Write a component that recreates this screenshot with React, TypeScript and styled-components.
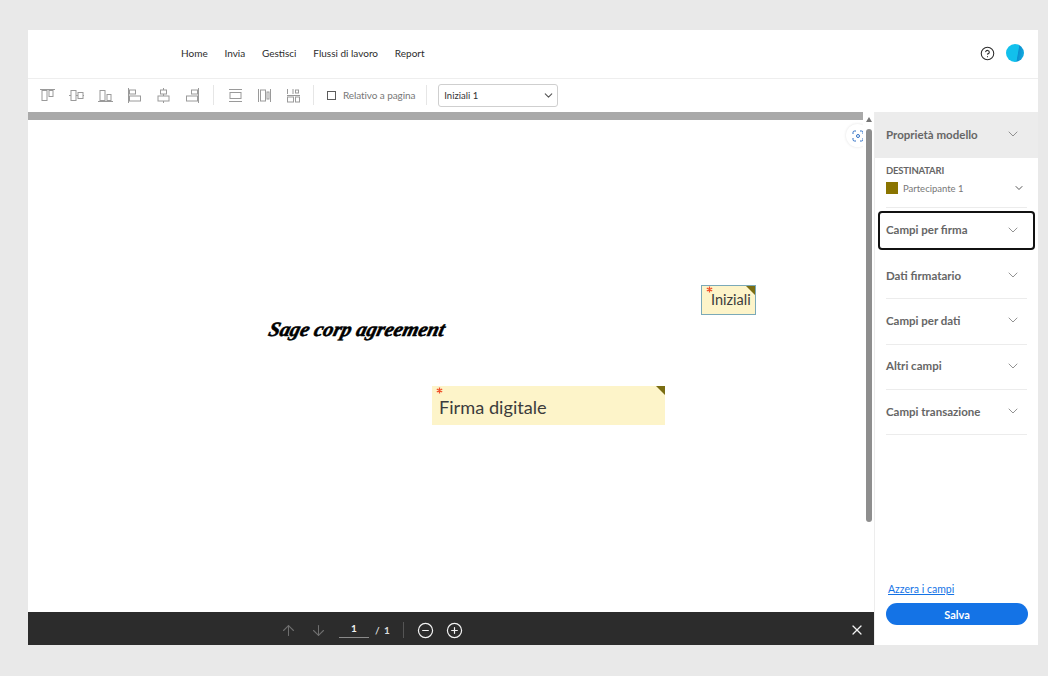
import React, { FunctionComponent } from 'react';
import styled, { createGlobalStyle } from 'styled-components';
import { ChevronDown, ArrowUp, ArrowDown, X, CircleHelp, CircleMinus, CirclePlus } from 'lucide-react';

const GlobalStyle = createGlobalStyle`
  html, body {
    margin: 0;
    padding: 0;
    background: #e9e9e9;
    font-family: "Lato", "Noto Sans", sans-serif;
  }
`;

const Page = styled.div`
  box-sizing: border-box;
  width: 1048px;
  height: 676px;
  padding: 30px 10px 31px 28px;
  overflow: hidden;
`;

const Frame = styled.div`
  display: flex;
  flex-direction: column;
  height: 100%;
  background: #fff;
`;

const Header = styled.header`
  display: flex;
  align-items: center;
  flex: 0 0 49px;
  box-sizing: border-box;
  padding: 0 14px 2px 153px;
  border-bottom: 1px solid #eeeeee;
`;

const Nav = styled.nav`
  display: flex;
  gap: 16.8px;
  flex: 1;
`;

const NavLink = styled.a`
  font-size: 10px;
  color: #2c2c2c;
`;

const HeaderIcons = styled.div`
  display: flex;
  align-items: center;
  gap: 11px;
  color: #2c2c2c;
`;

const Avatar = styled.span`
  display: block;
  width: 18px;
  height: 18px;
  border-radius: 50%;
  background: linear-gradient(100deg, #12c0ec 0 62%, #0c8fd0 66%, #14b4e4 100%);
`;

const Toolbar = styled.div`
  display: flex;
  align-items: center;
  flex: 0 0 33px;
  box-sizing: border-box;
  padding: 0 0 1px 11px;
`;

const ToolIcon = styled.svg`
  display: block;
  width: 17px;
  height: 17px;
  margin-right: 12px;
  fill: none;
  stroke: #9a9a9a;
  stroke-width: 1;
`;

const Divider = styled.span<{ $left?: number; $right?: number }>`
  width: 1px;
  height: 20px;
  background: #e6e6e6;
  margin-left: ${({ $left }) => $left ?? 0}px;
  margin-right: ${({ $right }) => $right ?? 13}px;
`;

const Check = styled.span`
  box-sizing: border-box;
  width: 9px;
  height: 9px;
  border: 1.5px solid #5c5c5c;
  margin-right: 7px;
`;

const CheckLabel = styled.span`
  font-size: 10px;
  letter-spacing: -0.1px;
  color: #777;
  margin-right: 11px;
`;

const Select = styled.div`
  box-sizing: border-box;
  display: flex;
  align-items: center;
  justify-content: space-between;
  width: 120px;
  height: 23px;
  padding: 0 2px 0 5px;
  border: 1px solid #cfcfcf;
  border-radius: 3px;
  font-size: 9.5px;
  color: #333;
`;

const Main = styled.main`
  display: flex;
  flex: 1;
  min-height: 0;
`;

const DocColumn = styled.div`
  display: flex;
  flex-direction: column;
  width: 846px;
`;

const DocRow = styled.div`
  display: flex;
  flex: 1;
  min-height: 0;
`;

const Canvas = styled.div`
  position: relative;
  flex: 1;
  border-top: 8px solid #a9a9a9;
  background: #fff;
`;

const Scrollbar = styled.div`
  position: relative;
  z-index: 1;
  display: flex;
  flex-direction: column;
  align-items: center;
  width: 11px;
  background: #fff;
`;

const ScrollArrow = styled.span`
  width: 0;
  height: 0;
  margin-top: 5px;
  border-left: 3.5px solid transparent;
  border-right: 3.5px solid transparent;
  border-bottom: 5px solid #777;
`;

const ScrollThumb = styled.span`
  width: 6px;
  height: 393px;
  margin-top: 7px;
  border-radius: 3px;
  background: #8e8e8e;
`;

const ScanButton = styled.span`
  position: absolute;
  top: 4px;
  right: -6px;
  display: flex;
  align-items: center;
  justify-content: center;
  width: 23px;
  height: 23px;
  border-radius: 50%;
  background: #fff;
  box-shadow: 0 0 3px rgba(0, 0, 0, 0.12);
`;

const Signature = styled.span`
  position: absolute;
  left: 241px;
  top: 198px;
  font-family: "Liberation Serif", serif;
  font-size: 20.3px;
  font-style: italic;
  font-weight: 700;
  color: #000;
  -webkit-text-stroke: 0.6px #000;
  transform: skewX(-14deg);
  white-space: nowrap;
`;

const Field = styled.div<{ $left: number; $top: number; $w: number; $h: number; $outlined?: boolean; $size: number }>`
  position: absolute;
  box-sizing: border-box;
  left: ${({ $left }) => $left}px;
  top: ${({ $top }) => $top}px;
  width: ${({ $w }) => $w}px;
  height: ${({ $h }) => $h}px;
  background: #fdf4c9;
  border: ${({ $outlined }) => ($outlined ? '1px solid #7aa9b8' : 'none')};
  font-size: ${({ $size }) => $size}px;
  color: #3c3c3c;
  white-space: nowrap;
`;

const FieldText = styled.span<{ $x: number; $y: number }>`
  position: absolute;
  left: ${({ $x }) => $x}px;
  top: ${({ $y }) => $y}px;
  line-height: 1;
`;

const StarMark = styled.svg<{ $x: number; $y: number }>`
  position: absolute;
  left: ${({ $x }) => $x}px;
  top: ${({ $y }) => $y}px;
  width: 7px;
  height: 7px;
  stroke: #f0512a;
  stroke-width: 1.3;
`;

const Corner = styled.span`
  position: absolute;
  top: 0;
  right: 0;
  width: 0;
  height: 0;
  border-top: 9px solid #7a6d12;
  border-left: 9px solid transparent;
`;

const PagerBar = styled.div`
  display: flex;
  align-items: center;
  flex: 0 0 33px;
  box-sizing: border-box;
  padding: 3px 9px 0 252px;
  background: #2c2c2c;
  color: #fff;
`;

const PagerButton = styled.span<{ $dim?: boolean }>`
  display: flex;
  margin-right: ${({ $dim }) => ($dim ? 13 : 12)}px;
  color: ${({ $dim }) => ($dim ? '#6f6f6f' : '#f2f2f2')};
`;

const PageInput = styled.span`
  box-sizing: border-box;
  width: 30px;
  margin-left: -1px;
  padding-bottom: 3px;
  border-bottom: 1px solid #8a8a8a;
  font-size: 10px;
  font-weight: 700;
  text-align: center;
  color: #f2f2f2;
`;

const PageTotal = styled.span`
  margin-left: 6px;
  font-size: 10px;
  font-weight: 700;
  word-spacing: 2px;
  color: #ddd;
`;

const PagerRule = styled.span`
  width: 1px;
  height: 16px;
  margin: 0 13px;
  background: #555;
`;

const PagerClose = styled.span`
  display: flex;
  margin-left: auto;
  color: #f2f2f2;
`;

const Sidebar = styled.aside`
  display: flex;
  flex-direction: column;
  flex: 1;
  border-left: 1px solid #ededed;
`;

const SidebarTitle = styled.div`
  display: flex;
  align-items: center;
  justify-content: space-between;
  flex: 0 0 46px;
  box-sizing: border-box;
  padding: 0 17px 2px 11px;
  background: #ececec;
  font-size: 11.5px;
  font-weight: 700;
  color: #666;
`;

const Recipients = styled.div`
  box-sizing: border-box;
  height: 50px;
  margin: 0 11px 0 11px;
  padding-top: 7px;
  border-bottom: 1px solid #ececec;
`;

const RecipientsLabel = styled.div`
  font-size: 9.5px;
  letter-spacing: -0.2px;
  line-height: 12px;
  font-weight: 700;
  color: #666;
`;

const RecipientRow = styled.div`
  display: flex;
  align-items: center;
  margin-top: 5px;
  padding-right: 2px;
  font-size: 9.5px;
  color: #777;
`;

const Swatch = styled.span`
  width: 12px;
  height: 12px;
  margin-right: 5px;
  background: #8a7400;
`;

const RecipientName = styled.span`
  flex: 1;
`;

const Accordion = styled.div`
  display: flex;
  flex-direction: column;
  flex: 1;
`;

const AccordionItem = styled.div<{ $focused?: boolean }>`
  box-sizing: border-box;
  display: flex;
  align-items: center;
  justify-content: space-between;
  font-size: 11.5px;
  font-weight: 700;
  color: #666;
  ${({ $focused }) =>
    $focused
      ? `
    height: 39px;
    margin: 3px 3px 4px 3px;
    padding: 0 12px 2px 6px;
    border: 2px solid #111;
    border-radius: 4px;
  `
      : `
    height: 45.3px;
    margin: 0 11px 0 11px;
    padding: 0 6px 2px 0;
    border-bottom: 1px solid #ececec;
  `}
`;

const SidebarFooter = styled.div`
  display: flex;
  flex-direction: column;
  margin-top: auto;
  padding: 0 10px 20px 11px;
`;

const ResetLink = styled.a`
  margin: 0 0 8px 2px;
  font-size: 10.5px;
  color: #1473e6;
  text-decoration: underline;
`;

const SaveButton = styled.button`
  height: 22px;
  padding: 0;
  border: none;
  border-radius: 11px;
  background: #1473e6;
  color: #fff;
  font-family: inherit;
  font-size: 11px;
  font-weight: 700;
`;

const alignIcons = [
  <><path d="M1 2.5h15" /><rect x="3" y="3.5" width="5" height="10" /><rect x="10" y="3.5" width="4" height="6" /></>,
  <><path d="M1 8.5h2M8 8.5h2M15 8.5h1" /><rect x="3" y="3.5" width="5" height="10" /><rect x="10" y="5.5" width="5" height="6" /></>,
  <><path d="M1 14.5h15" /><rect x="3" y="3.5" width="5" height="10" /><rect x="10" y="7.5" width="4" height="6" /></>,
  <><path d="M2.5 1v15" /><rect x="3.5" y="3" width="6" height="4" /><rect x="3.5" y="9" width="11" height="5" /></>,
  <><path d="M8.5 1v2M8.5 7v2M8.5 14v2" /><rect x="5.5" y="3" width="6" height="4" /><rect x="3" y="9" width="11" height="5" /></>,
  <><path d="M14.5 1v15" /><rect x="7.5" y="3" width="6" height="4" /><rect x="2.5" y="9" width="11" height="5" /></>,
];

const spreadIcons = [
  <><path d="M2 2.5h13M2 14.5h13" /><rect x="3" y="5.5" width="11" height="6" /></>,
  <><path d="M2.5 2v13M14.5 2v13" /><rect x="4.5" y="3" width="5" height="11" /><rect x="11" y="5" width="2" height="7" /></>,
  <><path d="M2.5 2v5M8 2v5M2 8.5h13" /><rect x="2.5" y="10" width="6" height="5" /><rect x="10.5" y="10" width="4" height="5" /><rect x="10.5" y="3" width="3" height="3" /></>,
];

const ToolGroup: FunctionComponent<{ icons: React.ReactNode[] }> = ({ icons }) => (
  <>
    {icons.map((shape, i) => (
      <ToolIcon key={i} viewBox="0 0 17 17">{shape}</ToolIcon>
    ))}
  </>
);

const RequiredMark: FunctionComponent<{ x: number; y: number }> = ({ x, y }) => (
  <StarMark $x={x} $y={y} viewBox="0 0 7 7">
    <path d="M3.5 0.5v6M0.8 2l5.4 3M6.2 2L0.8 5" />
  </StarMark>
);

const fieldSections = ['Dati firmatario', 'Campi per dati', 'Altri campi', 'Campi transazione'];

const App: FunctionComponent = () => (
  <Page>
    <GlobalStyle />
    <Frame>
      <Header>
        <Nav>
          <NavLink>Home</NavLink>
          <NavLink>Invia</NavLink>
          <NavLink>Gestisci</NavLink>
          <NavLink>Flussi di lavoro</NavLink>
          <NavLink>Report</NavLink>
        </Nav>
        <HeaderIcons>
          <CircleHelp size={15} strokeWidth={1.7} />
          <Avatar />
        </HeaderIcons>
      </Header>
      <Toolbar>
        <ToolGroup icons={alignIcons} />
        <Divider />
        <ToolGroup icons={spreadIcons} />
        <Divider $left={-1} />
        <Check />
        <CheckLabel>Relativo a pagina</CheckLabel>
        <Divider $right={11} />
        <Select>
          Iniziali 1
          <ChevronDown size={13} color="#555" />
        </Select>
      </Toolbar>
      <Main>
        <DocColumn>
          <DocRow>
            <Canvas>
              <ScanButton>
                <svg width="12" height="12" viewBox="0 0 12 12" fill="none" stroke="#2f6fc4" strokeWidth="1">
                  <path d="M1 4V2.5A1.5 1.5 0 0 1 2.5 1H4M8 1h1.5A1.5 1.5 0 0 1 11 2.5V4M11 8v1.5A1.5 1.5 0 0 1 9.5 11H8M4 11H2.5A1.5 1.5 0 0 1 1 9.5V8" />
                  <circle cx="6" cy="6" r="1.5" />
                </svg>
              </ScanButton>
              <Signature>Sage corp agreement</Signature>
              <Field $left={673} $top={165} $w={55} $h={30} $outlined $size={14.5}>
                <RequiredMark x={4} y={0} />
                <FieldText $x={9} $y={7}>Iniziali</FieldText>
                <Corner />
              </Field>
              <Field $left={404} $top={266} $w={233} $h={39} $size={18.2}>
                <RequiredMark x={4} y={1} />
                <FieldText $x={7} $y={12}>Firma digitale</FieldText>
                <Corner />
              </Field>
            </Canvas>
            <Scrollbar>
              <ScrollArrow />
              <ScrollThumb />
            </Scrollbar>
          </DocRow>
          <PagerBar>
            <PagerButton $dim><ArrowUp size={17} strokeWidth={1.5} /></PagerButton>
            <PagerButton $dim><ArrowDown size={17} strokeWidth={1.5} /></PagerButton>
            <PageInput>1</PageInput>
            <PageTotal>/ 1</PageTotal>
            <PagerRule />
            <PagerButton><CircleMinus size={17} strokeWidth={1.7} /></PagerButton>
            <PagerButton><CirclePlus size={17} strokeWidth={1.7} /></PagerButton>
            <PagerClose><X size={16} strokeWidth={1.8} /></PagerClose>
          </PagerBar>
        </DocColumn>
        <Sidebar>
          <SidebarTitle>
            Proprietà modello
            <ChevronDown size={16} strokeWidth={1.2} color="#777" />
          </SidebarTitle>
          <Recipients>
            <RecipientsLabel>DESTINATARI</RecipientsLabel>
            <RecipientRow>
              <Swatch />
              <RecipientName>Partecipante 1</RecipientName>
              <ChevronDown size={12} color="#555" />
            </RecipientRow>
          </Recipients>
          <Accordion>
            <AccordionItem $focused>
              Campi per firma
              <ChevronDown size={16} strokeWidth={1.2} color="#777" />
            </AccordionItem>
            {fieldSections.map((name) => (
              <AccordionItem key={name}>
                {name}
                <ChevronDown size={16} strokeWidth={1.2} color="#777" />
              </AccordionItem>
            ))}
            <SidebarFooter>
              <ResetLink>Azzera i campi</ResetLink>
              <SaveButton>Salva</SaveButton>
            </SidebarFooter>
          </Accordion>
        </Sidebar>
      </Main>
    </Frame>
  </Page>
);

export default App;
